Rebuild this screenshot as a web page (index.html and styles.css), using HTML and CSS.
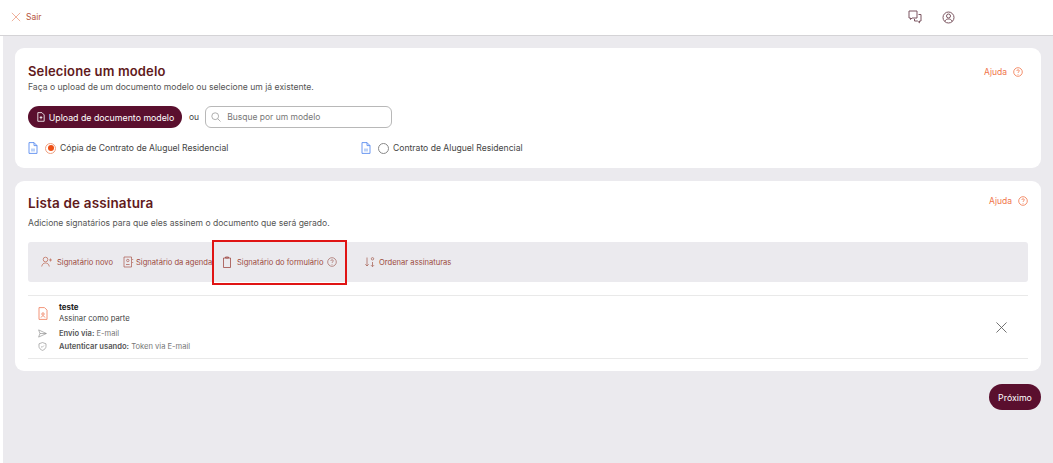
FILE: index.html
```html
<!DOCTYPE html>
<html lang="pt-BR">
<head>
<meta charset="utf-8">
<title>Modelo</title>
<link rel="stylesheet" href="styles.css">
</head>
<body>
<header class="topbar">
  <a class="exit">
    <svg class="i12" viewBox="0 0 12 12"><path d="M1 1l10 10M11 1L1 11" stroke="#e9967a" fill="none" stroke-width=".9"/></svg>
    <span>Sair</span>
  </a>
  <div class="top-icons">
    <svg class="i14" viewBox="0 0 14 14" fill="none" stroke="#7b5560" stroke-width="1"><path d="M1 1h8v7H4L2.500 9.500V8H1z"/><path d="M10.500 4.500H13v6.500h-1.500v1.800L9.500 11H6.500V9"/></svg>
    <svg class="i13" viewBox="0 0 13 13" fill="none" stroke="#7b5560" stroke-width="1"><circle cx="6.500" cy="6.500" r="5.500"/><circle cx="6.500" cy="5" r="2"/><path d="M2.800 10.500c.8-2 2.200-2.500 3.700-2.500s2.900.5 3.700 2.500"/></svg>
  </div>
</header>
<main class="content">
  <section class="card card-model">
    <a class="help help-model">Ajuda <svg class="i10" viewBox="0 0 10 10" fill="none" stroke="#f0754a" stroke-width=".8"><circle cx="5" cy="5" r="4.300"/><path d="M3.800 3.900c0-1.500 2.500-1.500 2.500 0 0 1-1.300 1-1.300 2M5 7v.7"/></svg></a>
    <h2 class="title">Selecione um modelo</h2>
    <p class="sub">Faça o upload de um documento modelo ou selecione um já existente.</p>
    <div class="upload-row">
      <button class="btn btn-upload">
        <svg class="i10" viewBox="0 0 10 11" fill="none" stroke="#fff" stroke-width=".9"><path d="M1.500.7h4.500l2.500 2.500v7h-7z"/><path d="M5 4.500v3.500M3.500 6h3"/></svg>
        Upload de documento modelo
      </button>
      <span class="or">ou</span>
      <label class="search">
        <svg class="i10" viewBox="0 0 10 10" fill="none" stroke="#9a9a9a" stroke-width=".8"><circle cx="4.200" cy="4.200" r="3.400"/><path d="M6.800 6.800l2.700 2.700"/></svg>
        <span>Busque por um modelo</span>
      </label>
    </div>
    <div class="models">
      <div class="model m1">
        <svg class="doc" viewBox="0 0 10 12" fill="none" stroke="#5b8def" stroke-width=".9"><path d="M1 .6h5l3 3v7.800H1z"/><path d="M6 .6v3h3"/><path d="M3 6.500h4v3H3z" fill="#bcd2f7" stroke="none"/></svg>
        <span class="radio on"></span>
        <span>Cópia de Contrato de Aluguel Residencial</span>
      </div>
      <div class="model">
        <svg class="doc" viewBox="0 0 10 12" fill="none" stroke="#5b8def" stroke-width=".9"><path d="M1 .6h5l3 3v7.800H1z"/><path d="M6 .6v3h3"/><path d="M3 6.500h4v3H3z" fill="#bcd2f7" stroke="none"/></svg>
        <span class="radio"></span>
        <span>Contrato de Aluguel Residencial</span>
      </div>
    </div>
  </section>

  <section class="card card-list">
    <a class="help help-list">Ajuda <svg class="i10" viewBox="0 0 10 10" fill="none" stroke="#f0754a" stroke-width=".8"><circle cx="5" cy="5" r="4.300"/><path d="M3.800 3.900c0-1.500 2.500-1.500 2.500 0 0 1-1.300 1-1.300 2M5 7v.7"/></svg></a>
    <h2 class="title title-list">Lista de assinatura</h2>
    <p class="sub sub-list">Adicione signatários para que eles assinem o documento que será gerado.</p>
    <div class="toolbar">
      <a class="tool t1">
        <svg class="i12" viewBox="0 0 12 12" fill="none" stroke="#c0715f" stroke-width=".8"><circle cx="4.500" cy="3.500" r="2.300"/><path d="M.7 10.500c.4-2.500 2-3.500 3.800-3.500s3.400 1 3.800 3.500M9.500 2.500v3M8 4h3"/></svg>
        Signatário novo
      </a>
      <a class="tool t2">
        <svg class="i12" viewBox="0 0 12 12" fill="none" stroke="#a9564a" stroke-width=".7"><path d="M2 1h7.500v10H2z"/><circle cx="5.800" cy="4.500" r="1.200"/><path d="M4 8.500h3.600M10.700 3v1M10.700 6v1"/></svg>
        Signatário da agenda
      </a>
      <a class="tool t3">
        <svg class="i12" viewBox="0 0 12 12" fill="none" stroke="#a04a44" stroke-width=".8"><path d="M2.500 2h7v9.500h-7zM4.500 1h3v1h-3z"/></svg>
        Signatário do formulário
        <svg class="i10" viewBox="0 0 10 10" fill="none" stroke="#a0615a" stroke-width=".7"><circle cx="5" cy="5" r="4.300"/><path d="M3.800 3.900c0-1.500 2.500-1.500 2.500 0 0 1-1.300 1-1.300 2M5 7v.7"/></svg>
      </a>
      <a class="tool t4">
        <svg class="i12" viewBox="0 0 12 12" fill="none" stroke="#a9685c" stroke-width=".8"><path d="M3 1.500v8.500M1.300 8.300L3 10l1.700-1.700M8.500 6v4.500M7 9.200l1.500 1.500 1.500-1.500"/><circle cx="8.500" cy="2.800" r="1.200"/></svg>
        Ordenar assinaturas
      </a>
      <div class="highlight"></div>
    </div>
    <div class="signer">
      <div class="signer-info">
        <div class="line name-line">
          <svg class="pdf" viewBox="0 0 10 13" fill="none" stroke="#f0896a" stroke-width=".9"><path d="M1 .6h5.500L9 3.100v9.300H1z"/><circle cx="5" cy="7" r="1.200"/><path d="M3 10.500c.5-1.200 1.200-1.500 2-1.500s1.500.3 2 1.500"/></svg>
          <div>
            <strong class="name">teste</strong>
            <div class="role">Assinar como parte</div>
          </div>
        </div>
        <div class="line meta">
          <svg class="i9" viewBox="0 0 10 10" fill="none" stroke="#8b8b8b" stroke-width=".7"><path d="M.7 1l8.600 4-8.600 4 1.500-4zM2.200 5h7"/></svg>
          <span><b>Envio via:</b> <em>E-mail</em></span>
        </div>
        <div class="line meta">
          <svg class="i9" viewBox="0 0 10 10" fill="none" stroke="#8b8b8b" stroke-width=".7"><path d="M5 .6l3.900 1.400v3c0 2-1.700 3.500-3.900 4.300C2.800 8.500 1.100 7 1.100 5V2z"/><path d="M3.500 5l1 1 2-2"/></svg>
          <span><b>Autenticar usando:</b> <em>Token via E-mail</em></span>
        </div>
      </div>
      <svg class="remove" viewBox="0 0 12 12" fill="none" stroke="#555" stroke-width=".9"><path d="M.5.5l11 11M11.500.5l-11 11"/></svg>
    </div>
  </section>

  <div class="actions"><button class="btn btn-next">Próximo</button></div>
</main>
</body>
</html>
```

FILE: styles.css
```css
* { box-sizing: border-box; }
html, body { margin: 0; height: 100%; }
body {
  background: #fff;
  font-family: "Inter", "Liberation Sans", sans-serif;
  color: #444;
  overflow: hidden;
}
svg { display: block; flex: none; }
.i9 { width: 9px; height: 9px; }
.i10 { width: 10px; height: 10px; }
.i12 { width: 12px; height: 12px; }
.i13 { width: 13px; height: 13px; }
.i14 { width: 14px; height: 14px; }

.topbar {
  height: 36px;
  border-bottom: 1px solid #d4d3d6;
  display: flex;
  align-items: center;
  padding: 0 0 1px 11px;
}
.exit { display: flex; align-items: center; gap: 5px; font-size: 8.500px; color: #b5533c; }
.exit .i12 { width: 10px; height: 10px; }
.top-icons { margin-left: 866px; display: flex; align-items: center; gap: 20px; }

.content {
  margin-left: 3px;
  height: 427px;
  background: #ebeaee;
  padding: 12px 12px 0;
  display: flex;
  flex-direction: column;
}
.card {
  background: #fff;
  border-radius: 9px;
  position: relative;
  padding: 0 13px;
}
.card-model { height: 120px; padding-top: 15px; }
.card-list { height: 190px; margin-top: 13px; padding-top: 14px; }
.title { margin: 0; font-size: 13px; line-height: 16px; font-weight: 600; color: #611a1c; letter-spacing: .15px; }
.sub { margin: 3px 0 0; font-size: 8.600px; line-height: 11px; color: #555; }
.title-list { font-size: 13.500px; }
.sub-list { margin-top: 7px; font-size: 8.550px; }
.help { position: absolute; display: flex; align-items: center; gap: 6px; font-size: 8.500px; color: #f0754a; }
.help-model { top: 19px; right: 18px; }
.help-list { top: 15px; right: 13px; }

.upload-row { display: flex; align-items: center; margin-top: 13px; }
.btn { border: 0; font-family: inherit; color: #fff; background: #5a0f2e; display: flex; align-items: center; justify-content: center; }
.btn-upload { width: 154px; height: 22px; border-radius: 11px; gap: 3px; font-size: 8.800px; padding: 0; }
.or { margin: 0 6px 0 7px; font-size: 8.500px; color: #444; }
.search {
  width: 187px;
  height: 22px;
  border: 1px solid #b8b8b8;
  border-radius: 6px;
  display: flex;
  align-items: center;
  gap: 6px;
  padding-left: 5px;
  font-size: 8.500px;
  color: #777;
}
.models { display: flex; margin-top: 14px; height: 12px; }
.model { display: flex; align-items: center; font-size: 8.600px; color: #444; }
.m1 { width: 333px; }
.doc { width: 10px; height: 12px; margin-right: 7px; }
.radio { width: 11px; height: 11px; border-radius: 50%; border: 1px solid #888; margin-right: 4px; position: relative; }
.radio.on { border-color: #f0a080; }
.radio.on::after { content: ""; position: absolute; inset: 1.500px; background: #ee4f14; border-radius: 50%; }

.toolbar {
  height: 40px;
  margin-top: 13px;
  background: #ebeaee;
  border-radius: 3px;
  display: flex;
  align-items: center;
  padding-left: 13px;
  font-size: 7.600px;
  color: #9d4b3e;
  position: relative;
}
.tool { display: flex; align-items: center; gap: 4px; }
.t1 { width: 81px; }
.t2 { width: 99px; gap: 2px; }
.t3 { width: 143px; }
.t4 { gap: 3px; }
.highlight { position: absolute; left: 184px; top: -2px; width: 135px; height: 45px; border: 2px solid #e01414; }

.signer {
  margin-top: 13px;
  height: 64px;
  border-top: 1px solid #e9e9e9;
  border-bottom: 1px solid #e9e9e9;
  display: flex;
  align-items: center;
  justify-content: space-between;
  padding: 0 21px 0 10px;
}
.signer-info { display: flex; flex-direction: column; }
.line { display: flex; align-items: center; }
.pdf { width: 10px; height: 13px; margin-right: 11px; }
.name-line { margin-bottom: 2px; }
.name { display: block; font-size: 7.900px; line-height: 10px; color: #222; font-weight: 700; }
.role { font-size: 7.700px; line-height: 13px; color: #444; }
.meta { font-size: 7.600px; line-height: 13px; gap: 12px; }
.meta b { font-weight: 600; color: #555; }
.meta em { font-style: normal; color: #777; }
.remove { width: 11px; height: 11px; }

.actions { display: flex; justify-content: flex-end; margin-top: 13px; }
.btn-next { width: 52px; height: 26px; border-radius: 13px; font-size: 8.800px; padding: 0; }
```
